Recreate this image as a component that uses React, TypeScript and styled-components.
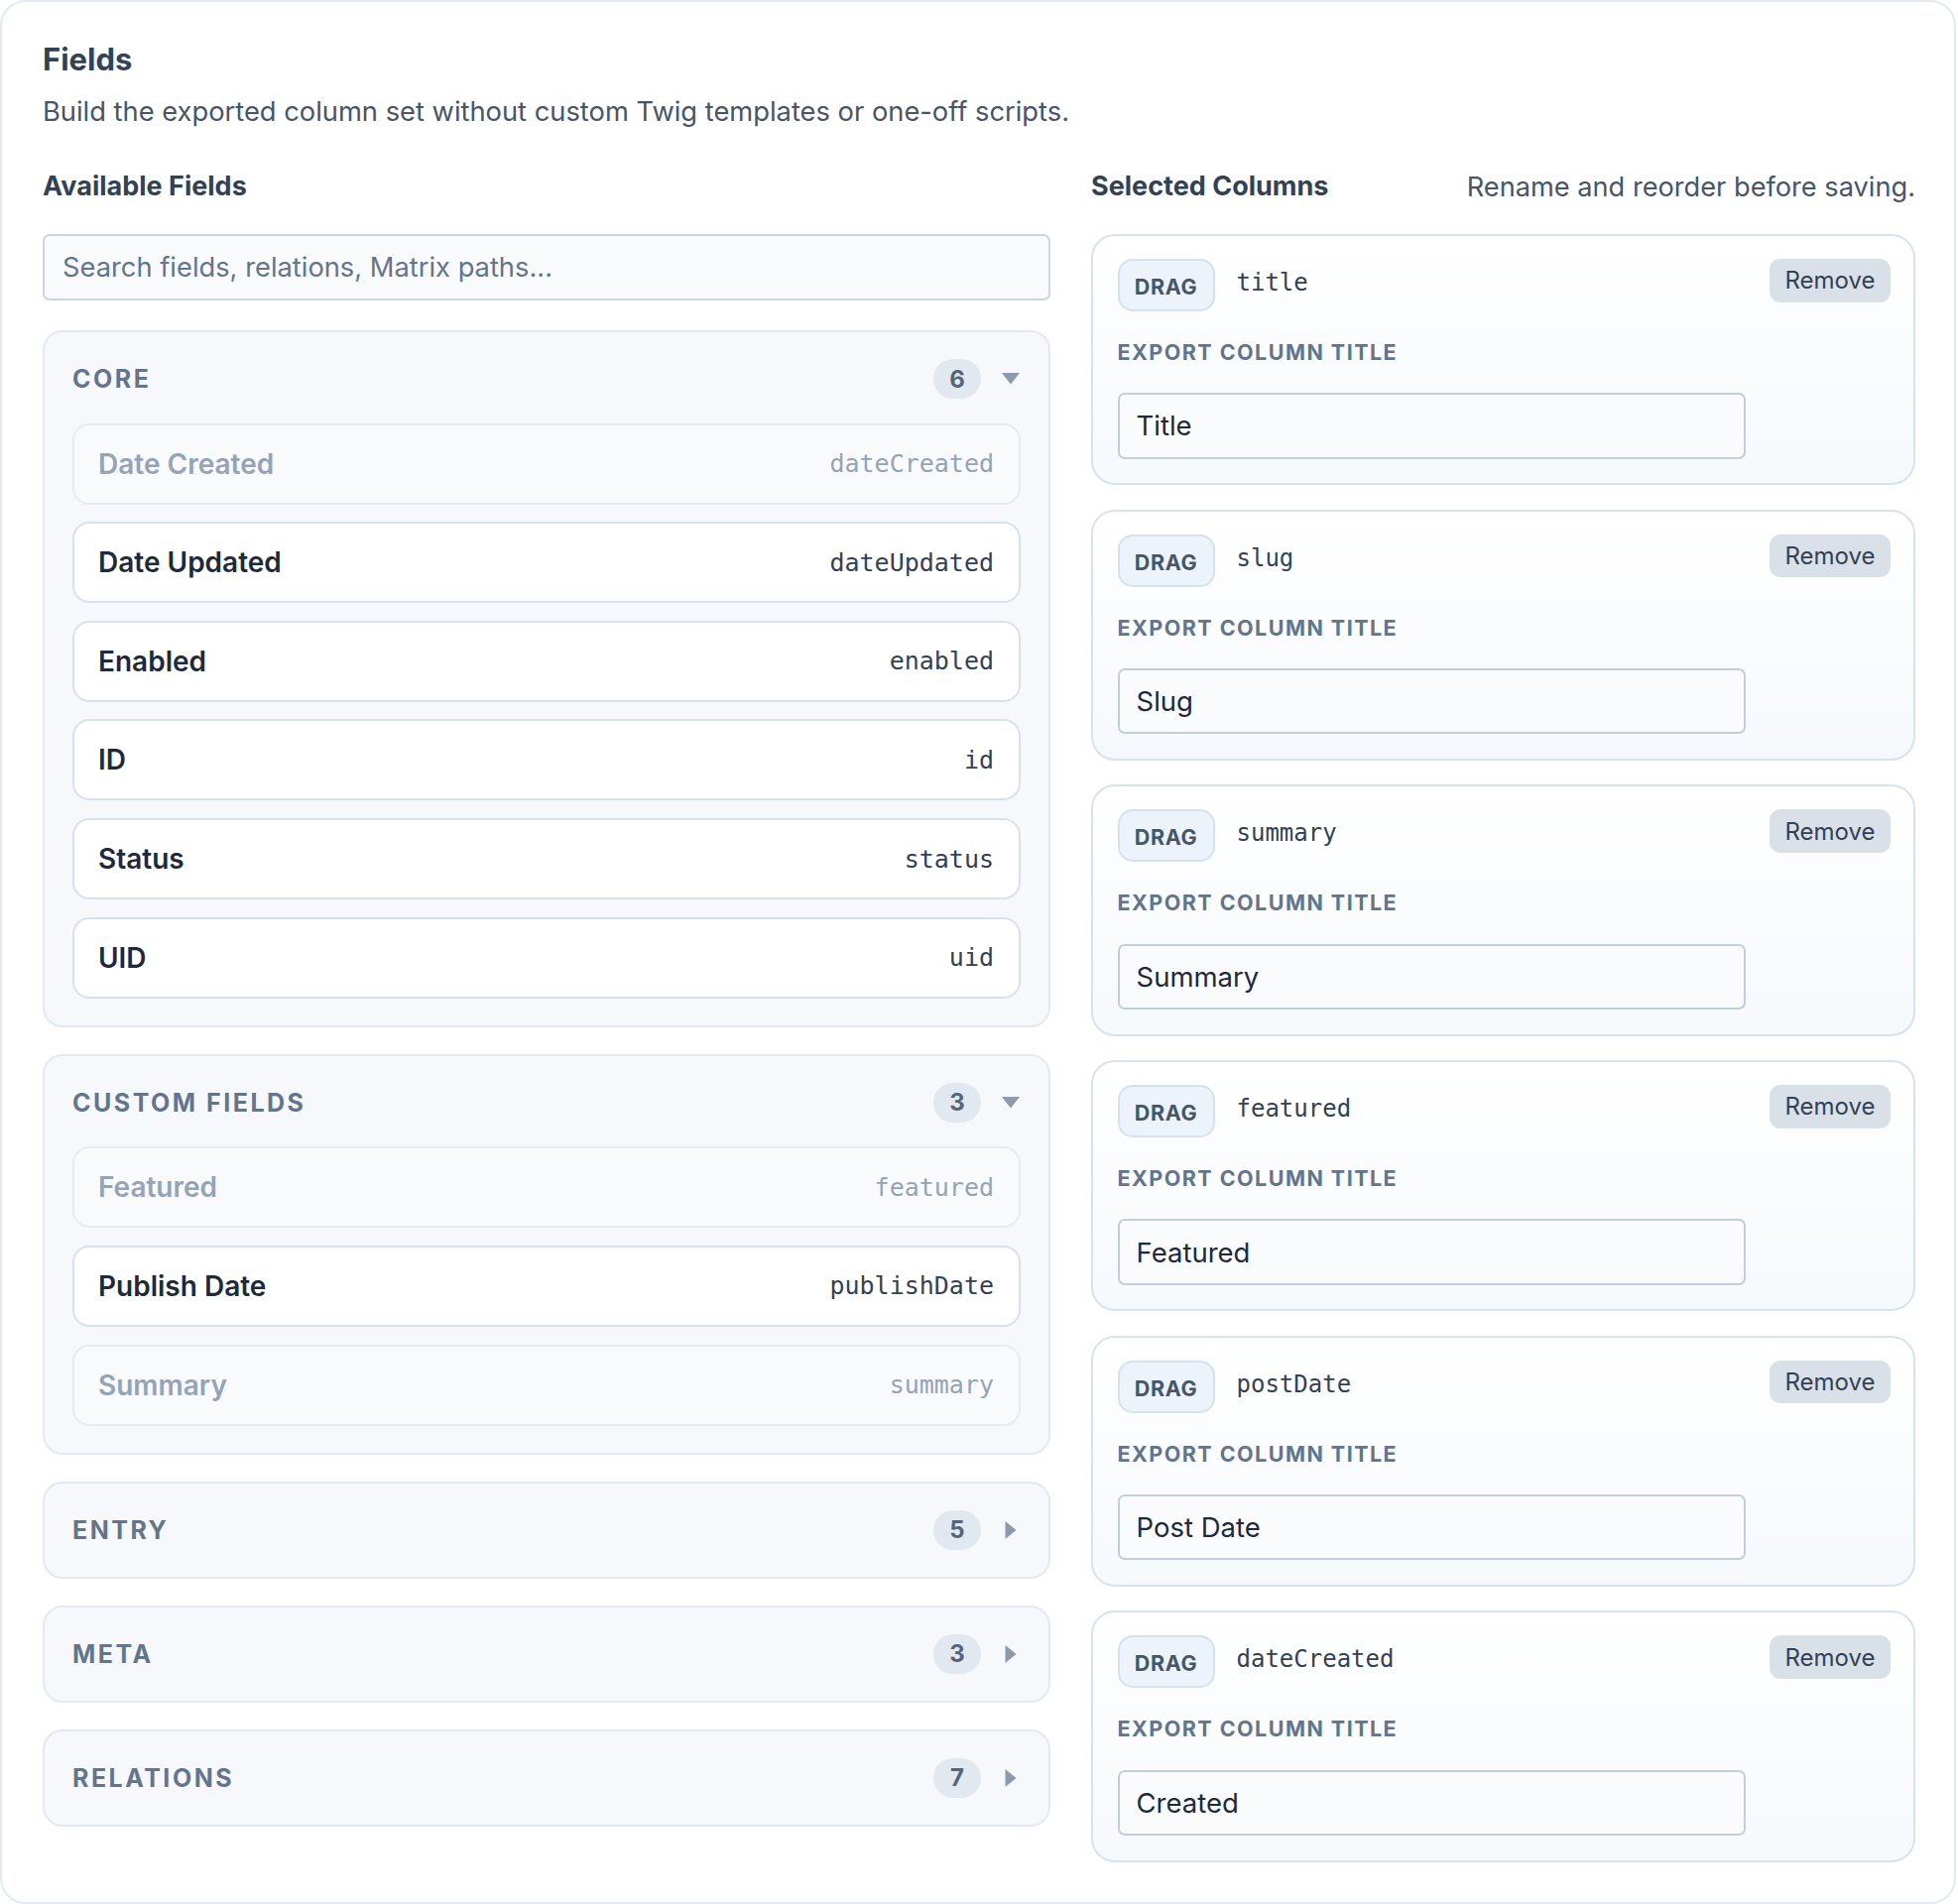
import React, { useState } from 'react';
import styled, { createGlobalStyle } from 'styled-components';

const GlobalStyle = createGlobalStyle`
    * {
        box-sizing: border-box;
    }
    body {
        margin: 0;
        background: #ffffff;
        font-family: Inter, "Noto Sans", "Liberation Sans", sans-serif;
    }
`;

const Panel = styled.section`
    width: 1972px;
    border: 2px solid #e5eaf0;
    border-radius: 26px;
    background: #ffffff;
    padding: 39px 39px 40px 41px;
`;

const Title = styled.h1`
    margin: 0;
    font-size: 31px;
    line-height: 38px;
    font-weight: 700;
    color: #334155;
`;

const Description = styled.p`
    margin: 16px 0 0;
    font-size: 27.3px;
    line-height: 36px;
    color: #475569;
`;

const Columns = styled.div`
    display: grid;
    grid-template-columns: 1016px 831px;
    column-gap: 41px;
    margin-top: 39px;
    align-items: start;
`;

const Column = styled.div`
    display: flex;
    flex-direction: column;
`;

const ColumnHeader = styled.div`
    display: flex;
    align-items: center;
    justify-content: space-between;
    height: 36px;
    margin-bottom: 30px;
`;

const ColumnTitle = styled.h2`
    margin: 0;
    font-size: 27px;
    line-height: 36px;
    font-weight: 700;
    color: #334155;
`;

const ColumnHint = styled.span`
    font-size: 27.2px;
    color: #475569;
`;

const Search = styled.input`
    width: 100%;
    height: 67px;
    padding: 0 18px;
    border: 2px solid #cbd5e1;
    border-radius: 7px;
    background: #f8fafc;
    font-family: inherit;
    font-size: 27.3px;
    color: #1e293b;
    margin-bottom: 30px;

    &::placeholder {
        color: #64748b;
    }
`;

const Groups = styled.div`
    display: flex;
    flex-direction: column;
    gap: 27px;
`;

const Group = styled.div`
    border: 2px solid #e3e9f0;
    border-radius: 20px;
    background: #f6f8fb;
    padding: 27px 28px;
`;

const GroupHeader = styled.div`
    display: flex;
    align-items: center;
    justify-content: space-between;
    height: 40px;
`;

const GroupName = styled.span`
    font-size: 25px;
    font-weight: 700;
    letter-spacing: 0.1em;
    color: #64748b;
`;

const GroupMeta = styled.div`
    display: flex;
    align-items: center;
    gap: 20px;
`;

const Count = styled.span`
    display: inline-flex;
    align-items: center;
    justify-content: center;
    width: 48px;
    height: 40px;
    border-radius: 20px;
    background: #e2e8f0;
    font-size: 24px;
    font-weight: 700;
    color: #55657a;
`;

const Caret = styled.svg`
    width: 20px;
    height: 20px;
    display: block;
`;

const Rows = styled.div`
    display: flex;
    flex-direction: column;
    gap: 17.6px;
    margin-top: 24.7px;
`;

const Row = styled.div<{ $used: boolean }>`
    display: flex;
    align-items: center;
    justify-content: space-between;
    height: 82px;
    padding: 0 25px 0 24px;
    border: 2px solid ${(p) => (p.$used ? '#e6ebf1' : '#d9e2ec')};
    border-radius: 17px;
    background: ${(p) => (p.$used ? '#f9fafc' : '#ffffff')};
    color: ${(p) => (p.$used ? '#94a3b8' : '#1e293b')};
`;

const RowLabel = styled.span`
    font-size: 28px;
    font-weight: 600;
`;

const Handle = styled.span<{ $used?: boolean }>`
    font-family: "DejaVu Sans Mono", "Liberation Mono", monospace;
    font-size: 25px;
    color: ${(p) => (p.$used ? '#94a3b8' : '#334155')};
`;

const Cards = styled.div`
    display: flex;
    flex-direction: column;
    gap: 24.4px;
`;

const Card = styled.div`
    border: 2px solid #d8e2ee;
    border-radius: 24px;
    background: linear-gradient(180deg, #ffffff 0%, #f6f9fc 100%);
    padding: 23px 23px 24.5px 24.5px;
`;

const CardTop = styled.div`
    display: flex;
    align-items: flex-start;
    justify-content: space-between;
`;

const CardSource = styled.div`
    display: flex;
    align-items: center;
    gap: 22px;
`;

const DragBadge = styled.span`
    display: inline-flex;
    align-items: center;
    justify-content: center;
    width: 98px;
    height: 53px;
    padding-top: 3px;
    border: 2px solid #d6e1ee;
    border-radius: 15px;
    background: #edf3fa;
    font-size: 21.5px;
    font-weight: 700;
    letter-spacing: 0.03em;
    color: #475569;
`;

const SourceHandle = styled.span`
    font-family: "DejaVu Sans Mono", "Liberation Mono", monospace;
    font-size: 24px;
    color: #334155;
    padding-bottom: 5px;
`;

const RemoveButton = styled.button`
    width: 122px;
    height: 43.5px;
    border: none;
    border-radius: 11px;
    background: #d9e0e8;
    font-family: inherit;
    font-size: 24px;
    color: #334155;
    padding: 0;
`;

const FieldLabel = styled.div`
    margin-top: 26px;
    font-size: 21.5px;
    line-height: 30px;
    font-weight: 700;
    letter-spacing: 0.068em;
    color: #64748b;
`;

const TitleInput = styled.input`
    display: block;
    width: 633px;
    height: 66.6px;
    margin-top: 26.2px;
    padding: 0 17px;
    border: 2px solid #c3cedb;
    border-radius: 7px;
    background: #fafbfd;
    font-family: inherit;
    font-size: 27.5px;
    color: #1e293b;
`;

type Field = { label: string; handle: string; used: boolean };
type FieldGroup = { name: string; count: number; open: boolean; fields: Field[] };

const groups: FieldGroup[] = [
    {
        name: 'Core',
        count: 6,
        open: true,
        fields: [
            { label: 'Date Created', handle: 'dateCreated', used: true },
            { label: 'Date Updated', handle: 'dateUpdated', used: false },
            { label: 'Enabled', handle: 'enabled', used: false },
            { label: 'ID', handle: 'id', used: false },
            { label: 'Status', handle: 'status', used: false },
            { label: 'UID', handle: 'uid', used: false },
        ],
    },
    {
        name: 'Custom Fields',
        count: 3,
        open: true,
        fields: [
            { label: 'Featured', handle: 'featured', used: true },
            { label: 'Publish Date', handle: 'publishDate', used: false },
            { label: 'Summary', handle: 'summary', used: true },
        ],
    },
    { name: 'Entry', count: 5, open: false, fields: [] },
    { name: 'Meta', count: 3, open: false, fields: [] },
    { name: 'Relations', count: 7, open: false, fields: [] },
];

const initialColumns = [
    { handle: 'title', title: 'Title' },
    { handle: 'slug', title: 'Slug' },
    { handle: 'summary', title: 'Summary' },
    { handle: 'featured', title: 'Featured' },
    { handle: 'postDate', title: 'Post Date' },
    { handle: 'dateCreated', title: 'Created' },
];

const CaretIcon: React.FC<{ open: boolean }> = ({ open }) => (
    <Caret viewBox="0 0 20 20">
        {open ? (
            <polygon points="1,4 19,4 10,15.5" fill="#8d9aab" />
        ) : (
            <polygon points="4.5,1 15.5,10 4.5,19" fill="#8d9aab" />
        )}
    </Caret>
);

const App: React.FC = () => {
    const [query, setQuery] = useState('');
    const [columns, setColumns] = useState(initialColumns);

    const rename = (i: number, value: string) => {
        setColumns((cols) => cols.map((c, j) => (j === i ? { ...c, title: value } : c)));
    };

    return (
        <>
            <GlobalStyle />
            <Panel>
                <Title>Fields</Title>
                <Description>
                    Build the exported column set without custom Twig templates or one-off scripts.
                </Description>
                <Columns>
                    <Column>
                        <ColumnHeader>
                            <ColumnTitle>Available Fields</ColumnTitle>
                        </ColumnHeader>
                        <Search
                            type="text"
                            placeholder="Search fields, relations, Matrix paths..."
                            value={query}
                            onChange={(e) => setQuery(e.target.value)}
                        />
                        <Groups>
                            {groups.map((g) => (
                                <Group key={g.name}>
                                    <GroupHeader>
                                        <GroupName>{g.name.toUpperCase()}</GroupName>
                                        <GroupMeta>
                                            <Count>{g.count}</Count>
                                            <CaretIcon open={g.open} />
                                        </GroupMeta>
                                    </GroupHeader>
                                    {g.open && (
                                        <Rows>
                                            {g.fields.map((f) => (
                                                <Row key={f.handle} $used={f.used}>
                                                    <RowLabel>{f.label}</RowLabel>
                                                    <Handle $used={f.used}>{f.handle}</Handle>
                                                </Row>
                                            ))}
                                        </Rows>
                                    )}
                                </Group>
                            ))}
                        </Groups>
                    </Column>
                    <Column>
                        <ColumnHeader>
                            <ColumnTitle>Selected Columns</ColumnTitle>
                            <ColumnHint>Rename and reorder before saving.</ColumnHint>
                        </ColumnHeader>
                        <Cards>
                            {columns.map((c, i) => (
                                <Card key={c.handle}>
                                    <CardTop>
                                        <CardSource>
                                            <DragBadge>DRAG</DragBadge>
                                            <SourceHandle>{c.handle}</SourceHandle>
                                        </CardSource>
                                        <RemoveButton>Remove</RemoveButton>
                                    </CardTop>
                                    <FieldLabel>EXPORT COLUMN TITLE</FieldLabel>
                                    <TitleInput
                                        type="text"
                                        value={c.title}
                                        onChange={(e) => rename(i, e.target.value)}
                                    />
                                </Card>
                            ))}
                        </Cards>
                    </Column>
                </Columns>
            </Panel>
        </>
    );
};

export default App;
